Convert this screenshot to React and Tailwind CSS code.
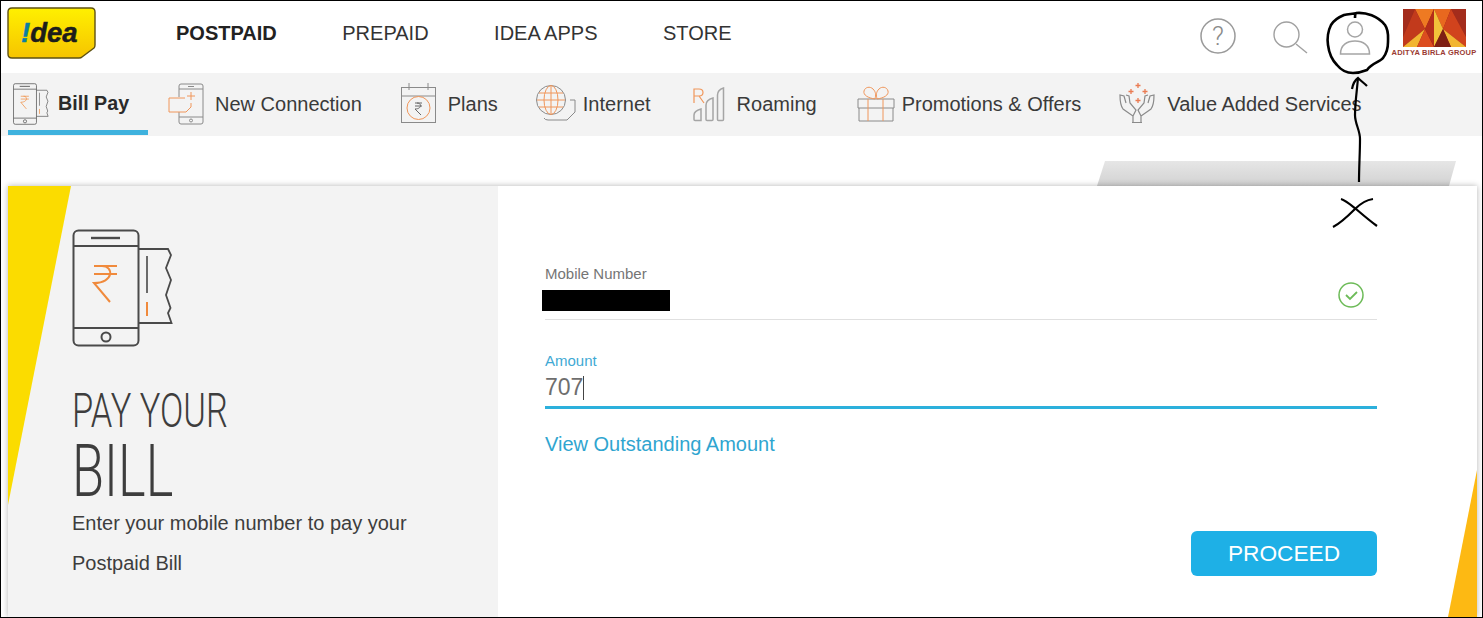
import React from 'react';

const orange = '#f0965a';
const gray = '#8a8a8a';

const IdeaLogo = () => (
    <svg viewBox="0 0 90 52" className="w-[90px] h-[52px] shrink-0">
        <defs>
            <linearGradient id="ideaYellow" x1="0" y1="0" x2="0" y2="1">
                <stop offset="0" stopColor="#fff000" />
                <stop offset="1" stopColor="#f6c400" />
            </linearGradient>
        </defs>
        <path d="M5 1h79q4 0 4 4v33q0 2-1 3L75 50q-1 1-3 1H5q-4 0-4-4V5q0-4 4-4z" fill="url(#ideaYellow)" stroke="#5f5212" strokeWidth="1.400" />
        <text x="14" y="35" fontFamily="Liberation Sans" fontWeight="700" fontStyle="italic" fontSize="27.500" fill="#1d1d1b" stroke="#1d1d1b" strokeWidth="0.500">
            <tspan fill="#0b7ea3" stroke="#0b7ea3">!</tspan>dea
        </text>
    </svg>
);

const BillPayIcon = ({ className }) => (
    <svg viewBox="0 0 102 118" fill="none" className={className}>
        <rect x="1.500" y="1.500" width="65" height="115" rx="5" stroke="#4a4a4a" strokeWidth="2" />
        <path d="M2 17h64M2 99h64" stroke="#4a4a4a" strokeWidth="2" />
        <path d="M19 9h29" stroke="#4a4a4a" strokeWidth="2.400" />
        <circle cx="34" cy="108" r="4.500" stroke="#4a4a4a" strokeWidth="2" />
        <path d="M22 37h23M22 45h23M30 37c12 0 12 17-8 17l16 19" stroke="#f08a3c" strokeWidth="2" />
        <path d="M67 20h29l3 6-5 13 5 12-5 15 4.500 13-2.500 5 3.500 10H67" stroke="#4a4a4a" strokeWidth="1.800" />
        <path d="M75 27v37" stroke="#6a6a6a" strokeWidth="2" />
        <path d="M75 73v14" stroke="#f08a3c" strokeWidth="2" />
    </svg>
);

const NewConnectionIcon = () => (
    <svg viewBox="0 0 36 42" fill="none" className="w-9 h-[42px]">
        <path d="M11 14V3q0-2 2-2h20q2 0 2 2v36q0 2-2 2H13q-2 0-2-2v-10" stroke={gray} />
        <path d="M11 34h24M11 6h24M20 3.500h6" stroke={gray} />
        <circle cx="23" cy="37.500" r="1.500" stroke={gray} />
        <path d="M17 15H1v14h17l5-5v-4" stroke={orange} />
        <path d="M19 13h8M23 9v8" stroke={orange} />
    </svg>
);

const PlansIcon = () => (
    <svg viewBox="0 0 36 42" fill="none" className="w-9 h-[42px]">
        <rect x="0.500" y="4.500" width="34" height="35" stroke={gray} />
        <path d="M0.500 13h34M8 0v7M27 0v7" stroke={gray} />
        <circle cx="17.500" cy="25" r="11.500" stroke={orange} />
        <path d="M14 20h7M14 23h7M16 20c5 0 5 6-2 6l6 6" stroke="#666" />
    </svg>
);

const InternetIcon = () => (
    <svg viewBox="0 0 42 38" fill="none" className="w-[42px] h-[38px]">
        <circle cx="16" cy="15" r="14.500" stroke={gray} />
        <ellipse cx="16" cy="15" rx="7" ry="14.500" stroke={orange} />
        <path d="M16 1v28M4 8h24M2 15h28M4 22h24" stroke={orange} />
        <path d="M35 15h5v12l-8 8H13q-3 0-4-2" stroke={gray} />
    </svg>
);

const RoamingIcon = () => (
    <svg viewBox="0 0 33 36" fill="none" className="w-[33px] h-9">
        <path d="M2 17V3h5q4 0 4 3.500T7 10H2m5 0l5 7" stroke={orange} strokeWidth="1.200" />
        <path d="M2 29q0-4 7-6v11.500H3q-1 0-1-1z" stroke="#a5a5a5" strokeWidth="1.500" />
        <path d="M14 19q0-5 7-7v21.500q0 1-1 1h-5q-1 0-1-1z" stroke="#a5a5a5" strokeWidth="1.500" />
        <path d="M25.500 9q0-5 6-7v31.500q0 1-1 1h-4q-1 0-1-1z" stroke="#a5a5a5" strokeWidth="1.500" />
    </svg>
);

const GiftIcon = () => (
    <svg viewBox="0 0 38 36" fill="none" className="w-[38px] h-9">
        <path d="M1 13h36v9H1zM2 22v13h34V22" stroke={gray} />
        <path d="M11 13v22M26 13v22" stroke={orange} />
        <path d="M18 13C11 12 6 9 7 5s6-5 9-2 3 6 2 10zM20 13c7-1 12-4 11-8s-6-5-9-2-3 6-2 10z" stroke={orange} />
    </svg>
);

const ValueIcon = () => (
    <svg viewBox="0 0 38 42" fill="none" className="w-[38px] h-[42px]">
        <path d="M15 39v-6L5 26Q2 22 2 12l4 1 2 7M8 12l3 1 1 7 6 7-3 6" stroke={gray} strokeWidth="1.200" />
        <path d="M23 39v-6l10-7q3-4 3-14l-4 1-2 7M30 12l-3 1-1 7-6 7 3 6M14 39.500h10" stroke={gray} strokeWidth="1.200" />
        <path d="M20 0v5M17.500 2.500h5M13 6v5M10.500 8.500h5M27 6v5M24.500 8.500h5M20 15v5M17.500 17.500h5" stroke="#ea7b52" strokeWidth="1.300" />
    </svg>
);

const BirlaLogo = () => (
    <div className="flex flex-col items-center w-[84px]">
        <svg viewBox="0 0 63 38" className="w-[63px] h-[38px]">
            <rect width="63" height="38" fill="#8e2418" />
            <path d="M0 0h12L0 28z" fill="#a32c1c" />
            <path d="M12 0h19l-9 20z" fill="#ee7a22" />
            <path d="M12 0L0 28v10l22-18z" fill="#c23a1c" />
            <path d="M0 38l22-18-8 18z" fill="#f2b632" />
            <path d="M22 20l9 18H14z" fill="#dc4d1f" />
            <path d="M22 20l9-20v38z" fill="#b52e1a" />
            <path d="M31 0h17l-8 20z" fill="#e8681f" />
            <path d="M31 0l9 20-9 18z" fill="#f2c23a" />
            <path d="M48 0h15v28z" fill="#a32c1c" />
            <path d="M48 0l15 28v10L40 20z" fill="#d1431d" />
            <path d="M40 20l23 18H48z" fill="#f2b632" />
            <path d="M31 38l9-18 8 18z" fill="#7e1f14" />
        </svg>
        <span className="font-['Liberation_Sans',sans-serif] font-bold text-[7.500px] leading-[10px] mt-[1px] text-[#9a3b33] whitespace-nowrap tracking-[0.2px]">ADITYA BIRLA GROUP</span>
    </div>
);

const navItems = ['PREPAID', 'IDEA APPS', 'STORE'];

const tabs = [
    { label: 'New Connection', icon: <NewConnectionIcon />, cls: 'ml-[20px] gap-[11px]' },
    { label: 'Plans', icon: <PlansIcon />, cls: 'ml-[39px] gap-[11px]' },
    { label: 'Internet', icon: <InternetIcon />, cls: 'ml-[37px] gap-[6px]' },
    { label: 'Roaming', icon: <RoamingIcon />, cls: 'ml-[41px] gap-[12px]' },
    { label: 'Promotions & Offers', icon: <GiftIcon />, cls: 'ml-[40px] gap-[7px]' },
    { label: 'Value Added Services', icon: <ValueIcon />, cls: 'ml-[37px] gap-[11px]' },
];

export default function App() {
    return (
        <div className="relative w-[1483px] h-[618px] overflow-hidden bg-white border border-black font-['Liberation_Sans',Arial,sans-serif] text-[#333]">
            {/* Top nav */}
            <header className="flex items-center h-[72px] pl-[6px] pr-[6px] pb-[8px]">
                <IdeaLogo />
                <nav className="flex items-center gap-[65.500px] ml-[79px] text-[20px] -mt-px">
                    <a className="font-bold text-[#222]">POSTPAID</a>
                    {navItems.map((item) => (
                        <a key={item} className="text-[#333]">{item}</a>
                    ))}
                </nav>
                <div className="flex items-center ml-auto">
                    <svg viewBox="0 0 36 36" fill="none" className="w-9 h-9 mr-[37px] mt-[5px]">
                        <circle cx="18" cy="18" r="17" stroke="#9a9a9a" strokeWidth="1.500" />
                        <text x="18" y="27" textAnchor="middle" fontSize="26" fontWeight="300" fill="#8a8a8a" fontFamily="Roboto">?</text>
                    </svg>
                    <svg viewBox="0 0 36 36" fill="none" className="w-9 h-9 mr-[30px] mt-[7px]">
                        <circle cx="13.500" cy="15.500" r="12.500" stroke="#a0a0a0" strokeWidth="1.400" />
                        <path d="M23 25l11 9" stroke="#a0a0a0" strokeWidth="1.400" />
                    </svg>
                    <svg viewBox="0 0 32 36" fill="none" className="w-8 h-9 mr-[21px] mt-[8px]">
                        <circle cx="16" cy="10.500" r="7.500" stroke="#a5a5a5" strokeWidth="1.500" />
                        <path d="M1.500 35C1.500 26 8 22 16 22s14.500 4 14.500 13z" stroke="#a5a5a5" strokeWidth="1.500" />
                    </svg>
                    <BirlaLogo />
                </div>
            </header>

            {/* Sub nav */}
            <div className="flex items-stretch h-[63px] bg-[#f3f3f3] text-[20px] pl-[7px]">
                <a className="flex items-center gap-[9px] w-[140px] h-[62px] border-b-[5px] border-[#3fb2de] pl-[5px] pt-[5px] font-bold text-[#2a2a2a]">
                    <BillPayIcon className="w-[36px] h-[42px]" />
                    <span className="text-[19.700px]">Bill Pay</span>
                </a>
                <div className="flex items-center -mt-px">
                    {tabs.map((tab) => (
                        <a key={tab.label} className={`flex items-center whitespace-nowrap text-[#3a3a3a] ${tab.cls}`}>
                            {tab.icon}
                            <span>{tab.label}</span>
                        </a>
                    ))}
                </div>
            </div>

            {/* Card area */}
            <main className="relative pt-[50px] pl-[7px] pr-[5px]">
                <div className="absolute top-[25px] left-[1096px] w-[359px] h-[25px] bg-gradient-to-b from-[#e6e6e6] to-[#d2d2d2] [clip-path:polygon(8px_0,100%_0,calc(100%-7px)_100%,0_100%)]" />
                <div className="relative flex h-[431px] bg-white shadow-[0_0_6px_rgba(0,0,0,0.3)]">
                    <aside className="relative w-[490px] shrink-0 bg-[#f3f3f3] pl-[64px] pt-[43px]">
                        <div className="absolute top-0 left-0 w-[63px] h-[319px] bg-[#fbdc00] [clip-path:polygon(0_0,100%_0,0_100%)]" />
                        <BillPayIcon className="relative w-[102px] h-[118px]" />
                        <h1 className="mt-[37px] font-['Roboto',sans-serif] font-light text-[#3d3d3d] scale-x-[0.717] origin-left whitespace-nowrap">
                            <span className="block text-[48px] leading-[54px]">PAY YOUR</span>
                            <span className="block text-[73px] leading-[66px]">BILL</span>
                        </h1>
                        <p className="-mt-[1px] text-[20px] leading-[40px] text-[#3d3d3d]">
                            Enter your mobile number to pay your<br />Postpaid Bill
                        </p>
                    </aside>

                    <section className="relative flex-1 pl-[47px] pr-[100px] pt-[80px]">
                        <label className="block text-[15px] leading-4 text-[#757575]">Mobile Number</label>
                        <div className="flex items-center justify-between h-[38px] border-b border-[#e0e0e0]">
                            <div className="w-[128px] h-[21px] -ml-[3px] -mt-[1px] bg-black" />
                            <svg viewBox="0 0 26 26" fill="none" className="w-[26px] h-[26px] mr-[13px] -mt-[11px]">
                                <circle cx="13" cy="13" r="12" stroke="#6dbb58" strokeWidth="1.500" />
                                <path d="M8 13l4 4 7-7" stroke="#6dbb58" strokeWidth="1.800" />
                            </svg>
                        </div>
                        <label className="block mt-[33px] text-[15px] leading-4 text-[#3fa9d4]">Amount</label>
                        <div className="flex items-center h-[40px] border-b-[3px] border-[#2cb0dc] text-[23px] text-[#6e6e6e]">
                            <span>707</span>
                            <span className="w-px h-[24px] bg-[#444]" />
                        </div>
                        <a className="block mt-[23px] text-[20px] leading-6 text-[#2fa5d0]">View Outstanding Amount</a>
                        <button className="absolute right-[100px] top-[345px] w-[186px] h-[45px] rounded-[6px] bg-[#1eb0e6] text-white text-[22.700px]">PROCEED</button>
                        <div className="absolute right-0 bottom-0 w-[29px] h-[147px] bg-[#fdb913] [clip-path:polygon(100%_0,100%_100%,0_100%)]" />
                    </section>
                </div>
            </main>

            {/* Hand-drawn annotation */}
            <svg viewBox="0 0 1483 618" fill="none" className="absolute top-[-1px] left-[-1px] w-[1483px] h-[618px] pointer-events-none">
                <path d="M1356 13c-1 1-1 3-1 5M1356 13c10-1 22 3 29 12 4 6 3 11 3 17 0 6-1 11-5 16-3 4-11 5-16 12-5 2-10 3-14 3-6 0-12-3-16-8-5-5-8-12-9-20-1-7 0-14 3-20 3-5 8-8 13-10 4-1 8-1 13-2z" stroke="#000" strokeWidth="2.600" />
                <path d="M1358 78c-1 12-3 25-3 37 0 9 5 15 5 24 0 14-1 28-1 43" stroke="#000" strokeWidth="2.200" />
                <path d="M1352 89c1-5 3-9 6-11 3 3 6 5 9 8" stroke="#000" strokeWidth="2.200" />
                <path d="M1341 199c4 1 10 6 15 10 7 6 14 12 21 17M1373 199c-7 1-13 5-18 10-7 7-14 14-22 18" stroke="#000" strokeWidth="2.200" />
            </svg>
        </div>
    );
}
